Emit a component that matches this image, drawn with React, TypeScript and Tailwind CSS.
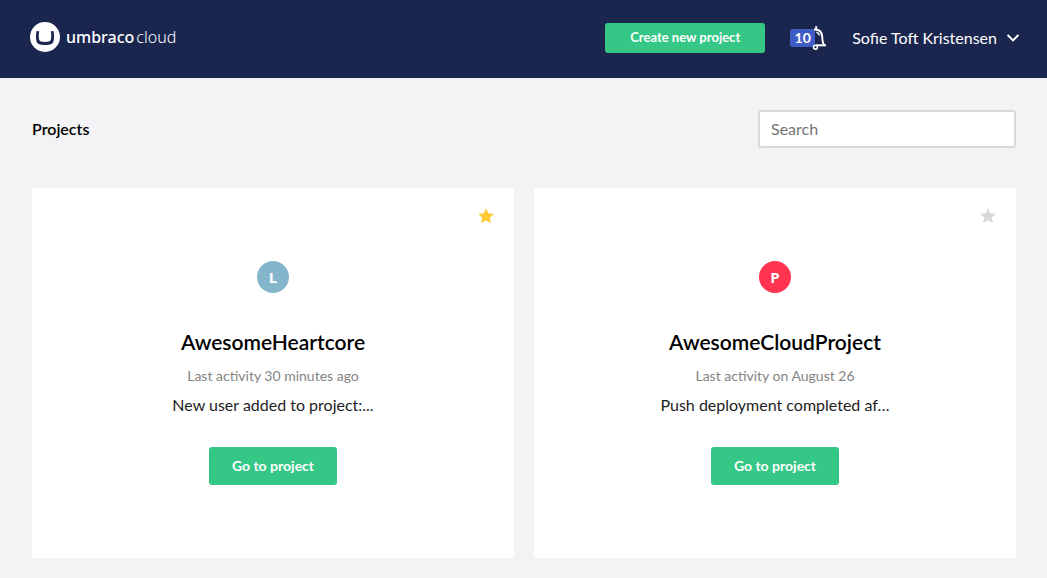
import React from "react";

type Project = {
  name: string;
  initial: string;
  avatarClass: string;
  starClass: string;
  favorite: boolean;
  activity: string;
  message: string;
};

const projects: Project[] = [
  {
    name: "AwesomeHeartcore",
    initial: "L",
    avatarClass: "bg-[#83b5cb]",
    starClass: "text-[#ffcb35]",
    favorite: true,
    activity: "Last activity 30 minutes ago",
    message: "New user added to project:...",
  },
  {
    name: "AwesomeCloudProject",
    initial: "P",
    avatarClass: "bg-[#fe3450]",
    starClass: "text-[#d8d9db]",
    favorite: false,
    activity: "Last activity on August 26",
    message: "Push deployment completed af…",
  },
];

function Logo() {
  return (
    <a href="#" className="flex items-center gap-1.5 pb-0.5 text-white" aria-label="umbraco cloud">
      <svg viewBox="0 0 30 30" className="size-[30px]" aria-hidden="true">
        <circle cx="15" cy="15" r="15" fill="#fff" />
        <path
          d="M6.6 9 C5.8 12.8 5.7 16.6 6.5 19.2 C7.3 22 9.8 22.900 15 22.900 C20.200 22.900 22.700 22 23.500 19.200 C24.300 16.600 24.200 12.800 23.400 9 L20.800 9.300 C21.300 12.600 21.400 15.400 20.900 17.500 C20.400 19.400 18.700 19.900 15 19.900 C11.300 19.900 9.600 19.400 9.100 17.500 C8.600 15.400 8.700 12.600 9.200 9.300 Z"
          fill="#1b264f"
        />
      </svg>
      <span className="flex items-baseline gap-0.5 font-['Noto_Sans',sans-serif] text-base leading-6">
        <span className="font-medium">umbraco</span>
        <span className="font-light">cloud</span>
      </span>
    </a>
  );
}

function Notifications() {
  return (
    <button type="button" className="flex items-center" aria-label="10 notifications">
      <span className="flex h-[18px] w-[25px] items-center justify-center rounded-[3px] bg-[#3f5bc6] text-sm font-bold">
        10
      </span>
      <svg
        viewBox="0 0 12 26"
        className="h-[26px] w-3 overflow-visible"
        fill="none"
        stroke="#fff"
        strokeWidth="2"
        aria-hidden="true"
      >
        <path d="M-1 4.500 C4.200 4.200 6.900 7 7.200 11.500 C7.400 15.500 7.400 18.500 9.500 20.500" />
        <path d="M1 20.300 H11" />
        <path d="M1.200 1.200 V5" />
        <circle cx="0.500" cy="22.200" r="1.900" strokeWidth="1.600" />
        <path d="M1.500 7.300 C3.200 7.900 4.200 9 4.400 10.500" strokeWidth="1.500" />
      </svg>
    </button>
  );
}

function Header() {
  return (
    <header className="flex h-[78px] items-center justify-between bg-[#1b264f] pr-7 pb-0.5 pl-[30px] text-white">
      <Logo />
      <div className="flex items-center gap-[25px]">
        <button
          type="button"
          className="h-[30px] rounded-[3px] bg-[#35c786] px-[25px] text-[13px] font-bold"
        >
          Create new project
        </button>
        <Notifications />
        <button type="button" className="flex items-center gap-2.5 text-base">
          Sofie Toft Kristensen
          <svg
            viewBox="0 0 12 8"
            className="h-2 w-3"
            fill="none"
            stroke="#fff"
            strokeWidth="2"
            aria-hidden="true"
          >
            <path d="M0.600 1 L6 6.400 L11.400 1" />
          </svg>
        </button>
      </div>
    </header>
  );
}

function ProjectCard({ project }: { project: Project }) {
  return (
    <article className="flex flex-col items-center bg-white px-5 pt-5 pb-[73px] text-center">
      <button
        type="button"
        aria-label={"Favorite " + project.name}
        aria-pressed={project.favorite}
        className={"self-end " + project.starClass}
      >
        <svg viewBox="0 0 16 16" className="size-4" fill="currentColor" aria-hidden="true">
          <path d="M8 0.500 L10.300 5.300 L15.700 6 L11.800 9.700 L12.800 15 L8 12.500 L3.200 15 L4.200 9.700 L0.300 6 L5.700 5.300 Z" />
        </svg>
      </button>
      <div
        className={
          "mt-[37px] flex size-8 items-center justify-center rounded-full font-['Open_Sans',sans-serif] text-[15px] leading-5 font-bold text-white " +
          project.avatarClass
        }
      >
        {project.initial}
      </div>
      <h2 className="mt-[35px] text-[21px] leading-7 font-semibold text-black">{project.name}</h2>
      <p className="mt-2.5 text-sm leading-5 text-[#838383]">{project.activity}</p>
      <p className="mt-[7px] text-base leading-6 text-[#1d1d1d]">{project.message}</p>
      <a
        href="#"
        className="mt-[30px] flex h-[38px] items-center rounded-[3px] bg-[#35c786] px-[23px] text-sm font-bold text-white"
      >
        Go to project
      </a>
    </article>
  );
}

export default function App() {
  return (
    <div className="min-h-screen bg-[#f3f3f5] font-[Lato,sans-serif]">
      <Header />
      <main className="pt-8 pr-[31px] pb-5 pl-8">
        <div className="flex items-center justify-between">
          <h1 className="text-base font-semibold text-black">Projects</h1>
          <input
            type="search"
            aria-label="Search projects"
            placeholder="Search"
            className="h-[38px] w-[258px] rounded-[3px] border-2 border-[#d8d9db] bg-white px-[11px] pb-0.5 text-base placeholder:text-[#757575]"
          />
        </div>
        <section className="mt-10 grid grid-cols-2 gap-5">
          {projects.map((project) => (
            <ProjectCard key={project.name} project={project} />
          ))}
        </section>
      </main>
    </div>
  );
}
